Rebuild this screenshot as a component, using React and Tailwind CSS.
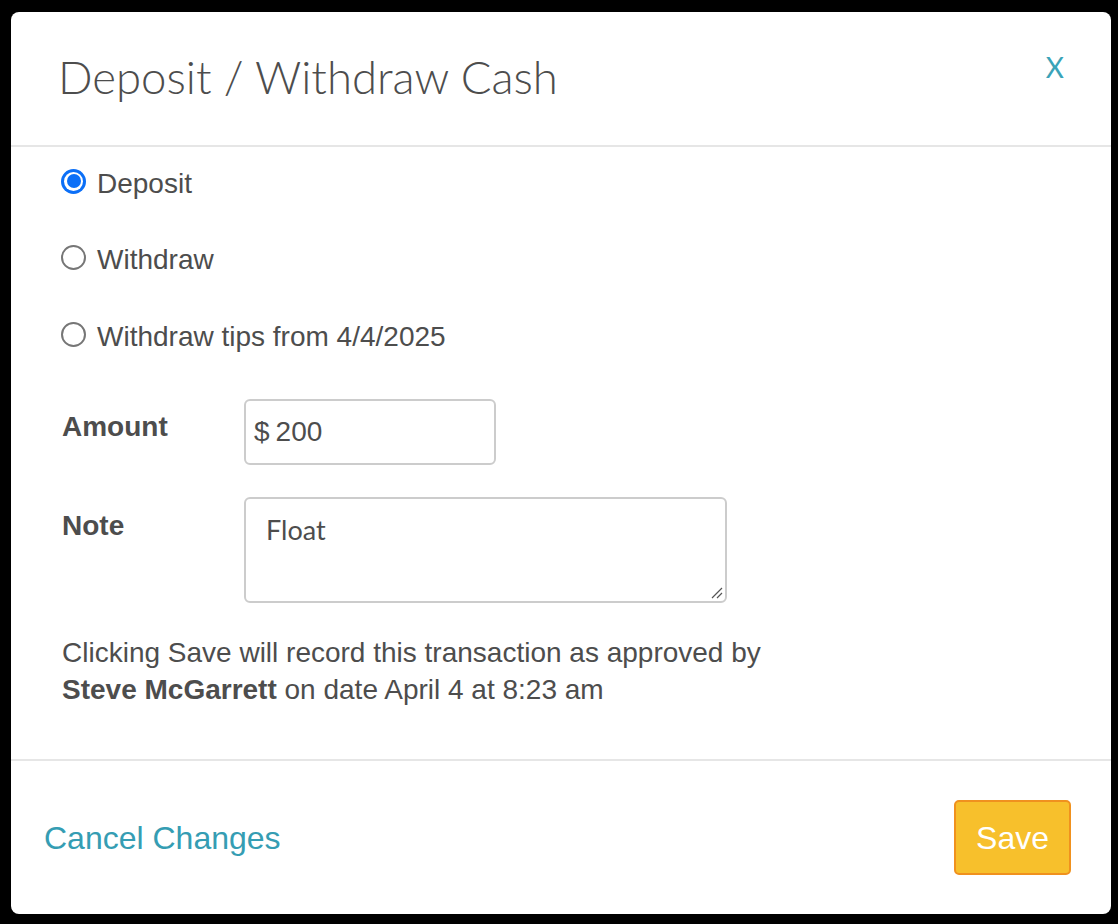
import React, { useState } from 'react';

const options = [
  { id: 'deposit', label: 'Deposit' },
  { id: 'withdraw', label: 'Withdraw' },
  { id: 'tips', label: 'Withdraw tips from 4/4/2025' },
];

function Radio({ checked }) {
  if (checked) {
    return (
      <span className="flex items-center justify-center w-[25px] h-[25px] rounded-full bg-[#0b6ff7]">
        <span className="flex items-center justify-center w-[19px] h-[19px] rounded-full bg-white">
          <span className="block w-[14px] h-[14px] rounded-full bg-[#0b6ff7]" />
        </span>
      </span>
    );
  }
  return <span className="block w-[25px] h-[25px] rounded-full border-2 border-[#767676] bg-white" />;
}

export default function App() {
  const [selected, setSelected] = useState('deposit');

  return (
    <div className="min-h-[924px] bg-black pt-[12px] pl-[11px] font-['Liberation_Sans',Arial,sans-serif] text-[#4d4d4d]">
      <div className="w-[1100px] h-[902px] bg-white rounded-[8px] flex flex-col">
        {/* header */}
        <div className="h-[135px] border-b-2 border-[#e6e6e6] flex items-start justify-between pl-[47px] pr-[47px] pt-[39px]">
          <h2 className="font-['Lato',sans-serif] font-light text-[45.5px] leading-[52px] text-[#4d4d4d]">
            Deposit / Withdraw Cash
          </h2>
          <button className="font-['Lato',sans-serif] text-[28px] leading-none text-[#3aa3b8] mt-[2px]">
            X
          </button>
        </div>

        {/* body */}
        <div className="flex-1 pl-[50px] pt-[15px]">
          <div className="flex flex-col gap-[38.5px]">
            {options.map((o) => (
              <label
                key={o.id}
                onClick={() => setSelected(o.id)}
                className="flex items-center h-[38px] gap-[11px] text-[28px] cursor-pointer"
              >
                <Radio checked={selected === o.id} />
                <span className="mt-[5px]">{o.label}</span>
              </label>
            ))}
          </div>

          <div className="flex items-start mt-[46px]">
            <div className="w-[183px] pl-[1px] pt-[12px] text-[28px] font-bold leading-[32px]">Amount</div>
            <div className="w-[252px] h-[66px] border-2 border-[#cccccc] rounded-[6px] flex items-center pl-[8px] text-[28px]">
              <span>$</span>
              <span className="ml-[6px]">200</span>
            </div>
          </div>

          <div className="flex items-start mt-[32px]">
            <div className="w-[183px] pl-[1px] pt-[13px] text-[28px] font-bold leading-[32px]">Note</div>
            <div className="relative w-[483px] h-[106px] border-2 border-[#cccccc] rounded-[6px] pl-[20px] pt-[14px]">
              <span className="font-['Lato',sans-serif] text-[27px] leading-[34px]">Float</span>
              <svg className="absolute right-[2px] bottom-[2px]" width="14" height="14" viewBox="0 0 14 14">
                <path d="M13 3 L3 13 M13 8 L8 13" stroke="#555" strokeWidth="1.2" fill="none" />
              </svg>
            </div>
          </div>

          <p className="mt-[31px] pl-[1px] text-[28px] leading-[37px]">
            Clicking Save will record this transaction as approved by
            <br />
            <span className="font-bold">Steve McGarrett</span> on date April 4 at 8:23 am
          </p>
        </div>

        {/* footer */}
        <div className="h-[155px] border-t-2 border-[#e6e6e6] flex items-center justify-between pl-[33px] pr-[40px]">
          <button className="text-[32px] text-[#359db3] leading-none">Cancel Changes</button>
          <button className="w-[117px] h-[75px] rounded-[5px] bg-[#f7c02c] border-2 border-[#f0911e] text-white text-[32px] leading-none">
            Save
          </button>
        </div>
      </div>
    </div>
  );
}
